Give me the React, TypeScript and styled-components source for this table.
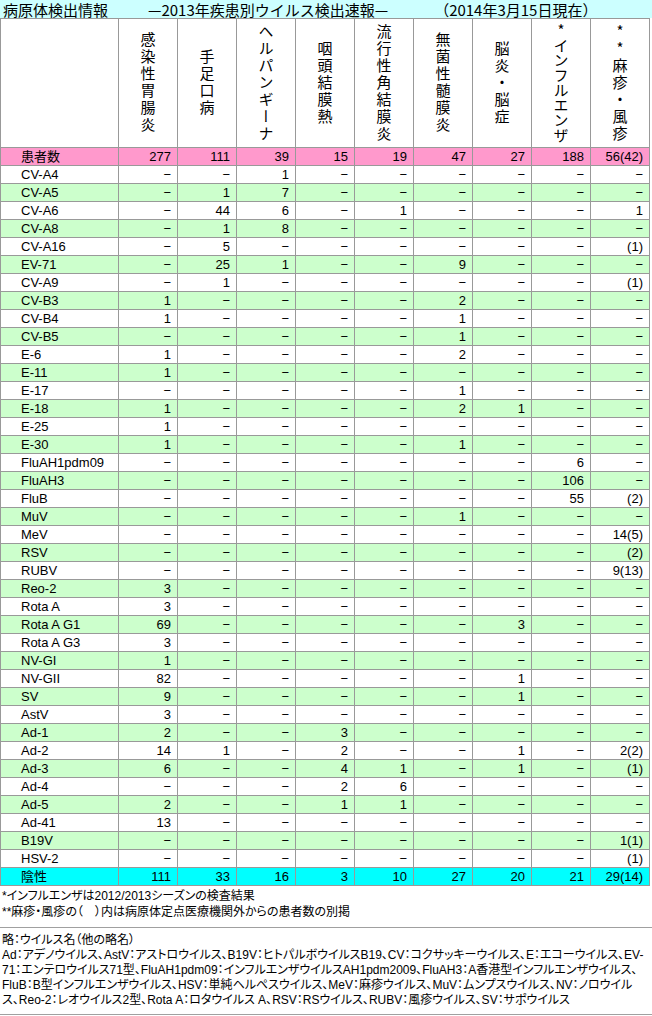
import React from "react";
import styled, { createGlobalStyle } from "styled-components";

type Tone = "total" | "even" | "odd" | "negative";

const GlobalStyle = createGlobalStyle`
  html, body {
    margin: 0;
    padding: 0;
    background: #ffffff;
  }
  body {
    font-family: "Liberation Sans", "Noto Sans CJK JP", sans-serif;
    color: #000000;
  }
`;

const Page = styled.div`
  width: 652px;
`;

const TitleBar = styled.div`
  height: 18px;
  box-sizing: border-box;
  padding: 2px 0 0 3px;
  background: #ccffff;
  display: flex;
  font-family: "Noto Sans CJK JP", sans-serif;
  font-size: 15px;
  line-height: 16px;
  white-space: nowrap;
`;

const TitlePart = styled.span<{ $gap?: number }>`
  margin-left: ${(p) => p.$gap ?? 0}px;
`;

const Table = styled.div`
  width: 650px;
  border-top: 1px solid #999999;
  border-left: 1px solid #999999;
  box-sizing: border-box;
`;

const Row = styled.div<{ $tone?: Tone; $height?: number }>`
  display: grid;
  grid-template-columns: 118px repeat(9, 59px);
  height: ${(p) => p.$height ?? 18}px;
  box-sizing: border-box;
  border-bottom: 1px solid #999999;
  background: ${(p) =>
    p.$tone === "total"
      ? "#ff99cc"
      : p.$tone === "negative"
      ? "#00ffff"
      : p.$tone === "even"
      ? "#ccffcc"
      : "#ffffff"};
`;

const HeadCell = styled.div`
  border-right: 1px solid #999999;
  display: flex;
  align-items: center;
  justify-content: center;
`;

const VerticalLabel = styled.span<{ $tight?: boolean }>`
  writing-mode: vertical-rl;
  text-orientation: upright;
  font-family: "Noto Sans CJK JP", sans-serif;
  font-size: 15px;
  line-height: 15px;
  letter-spacing: ${(p) => (p.$tight ? 0 : 2)}px;
`;

const LabelCell = styled.div`
  border-right: 1px solid #999999;
  padding-left: 20px;
  font-size: 13px;
  line-height: 17px;
  white-space: nowrap;
`;

const ValueCell = styled.div`
  border-right: 1px solid #999999;
  padding-right: 6px;
  text-align: right;
  font-size: 13px;
  line-height: 17px;
  white-space: nowrap;
`;

const Notes = styled.div<{ $lineHeight: number; $top: number }>`
  margin-top: ${(p) => p.$top}px;
  padding-left: 2px;
  font-family: "Liberation Sans", "Noto Sans CJK JP", sans-serif;
  font-size: 12px;
  line-height: ${(p) => p.$lineHeight}px;
  font-feature-settings: "palt";
  white-space: nowrap;
`;

const Divider = styled.div<{ $top: number }>`
  margin-top: ${(p) => p.$top}px;
  height: 0;
  border-top: 1px solid #a0a0a0;
`;

// the flu column has one more glyph, so its header is set tighter
const diseases: [string, boolean][] = [
  ["感染性胃腸炎", false],
  ["手足口病", false],
  ["ヘルパンギーナ", false],
  ["咽頭結膜熱", false],
  ["流行性角結膜炎", false],
  ["無菌性髄膜炎", false],
  ["脳炎・脳症", false],
  ["*インフルエンザ", true],
  ["**麻疹・風疹", false],
];

const d = "-";

const rows: [string, string[]][] = [
  ["CV-A4", [d, d, "1", d, d, d, d, d, d]],
  ["CV-A5", [d, "1", "7", d, d, d, d, d, d]],
  ["CV-A6", [d, "44", "6", d, "1", d, d, d, "1"]],
  ["CV-A8", [d, "1", "8", d, d, d, d, d, d]],
  ["CV-A16", [d, "5", d, d, d, d, d, d, "(1)"]],
  ["EV-71", [d, "25", "1", d, d, "9", d, d, d]],
  ["CV-A9", [d, "1", d, d, d, d, d, d, "(1)"]],
  ["CV-B3", ["1", d, d, d, d, "2", d, d, d]],
  ["CV-B4", ["1", d, d, d, d, "1", d, d, d]],
  ["CV-B5", [d, d, d, d, d, "1", d, d, d]],
  ["E-6", ["1", d, d, d, d, "2", d, d, d]],
  ["E-11", ["1", d, d, d, d, d, d, d, d]],
  ["E-17", [d, d, d, d, d, "1", d, d, d]],
  ["E-18", ["1", d, d, d, d, "2", "1", d, d]],
  ["E-25", ["1", d, d, d, d, d, d, d, d]],
  ["E-30", ["1", d, d, d, d, "1", d, d, d]],
  ["FluAH1pdm09", [d, d, d, d, d, d, d, "6", d]],
  ["FluAH3", [d, d, d, d, d, d, d, "106", d]],
  ["FluB", [d, d, d, d, d, d, d, "55", "(2)"]],
  ["MuV", [d, d, d, d, d, "1", d, d, d]],
  ["MeV", [d, d, d, d, d, d, d, d, "14(5)"]],
  ["RSV", [d, d, d, d, d, d, d, d, "(2)"]],
  ["RUBV", [d, d, d, d, d, d, d, d, "9(13)"]],
  ["Reo-2", ["3", d, d, d, d, d, d, d, d]],
  ["Rota A", ["3", d, d, d, d, d, d, d, d]],
  ["Rota A G1", ["69", d, d, d, d, d, "3", d, d]],
  ["Rota A G3", ["3", d, d, d, d, d, d, d, d]],
  ["NV-GI", ["1", d, d, d, d, d, d, d, d]],
  ["NV-GII", ["82", d, d, d, d, d, "1", d, d]],
  ["SV", ["9", d, d, d, d, d, "1", d, d]],
  ["AstV", ["3", d, d, d, d, d, d, d, d]],
  ["Ad-1", ["2", d, d, "3", d, d, d, d, d]],
  ["Ad-2", ["14", "1", d, "2", d, d, "1", d, "2(2)"]],
  ["Ad-3", ["6", d, d, "4", "1", d, "1", d, "(1)"]],
  ["Ad-4", [d, d, d, "2", "6", d, d, d, d]],
  ["Ad-5", ["2", d, d, "1", "1", d, d, d, d]],
  ["Ad-41", ["13", d, d, d, d, d, d, d, d]],
  ["B19V", [d, d, d, d, d, d, d, d, "1(1)"]],
  ["HSV-2", [d, d, d, d, d, d, d, d, "(1)"]],
];

const patients = ["277", "111", "39", "15", "19", "47", "27", "188", "56(42)"];
const negatives = ["111", "33", "16", "3", "10", "27", "20", "21", "29(14)"];

const show = (v: string) => (v === d ? "−" : v);

const DataRow = ({ label, values, tone }: { label: string; values: string[]; tone: Tone }) => (
  <Row $tone={tone}>
    <LabelCell>{label}</LabelCell>
    {values.map((v, i) => (
      <ValueCell key={i}>{show(v)}</ValueCell>
    ))}
  </Row>
);

export default function App() {
  return (
    <Page>
      <GlobalStyle />
      <TitleBar>
        <TitlePart>病原体検出情報</TitlePart>
        <TitlePart $gap={40}>—2013年疾患別ウイルス検出速報—</TitlePart>
        <TitlePart $gap={46}>（2014年3月15日現在）</TitlePart>
      </TitleBar>

      <Table>
        <Row $height={129}>
          <HeadCell />
          {diseases.map(([name, tight]) => (
            <HeadCell key={name}>
              <VerticalLabel $tight={tight}>{name}</VerticalLabel>
            </HeadCell>
          ))}
        </Row>
        <DataRow label="患者数" values={patients} tone="total" />
        {rows.map(([label, values], i) => (
          <DataRow key={label} label={label} values={values} tone={i % 2 === 0 ? "odd" : "even"} />
        ))}
        <DataRow label="陰性" values={negatives} tone="negative" />
      </Table>

      <Notes $lineHeight={16} $top={2}>
        *インフルエンザは2012/2013シーズンの検査結果
        <br />
        **麻疹・風疹の（　）内は病原体定点医療機関外からの患者数の別掲
      </Notes>
      <Divider $top={7} />
      <Notes $lineHeight={15} $top={5}>
        略：ウイルス名（他の略名）
        <br />
        Ad：アデノウイルス、AstV：アストロウイルス、B19V：ヒトパルボウイルスB19、CV：コクサッキーウイルス、E：エコーウイルス、EV-
        <br />
        71：エンテロウイルス71型、FluAH1pdm09：インフルエンザウイルスAH1pdm2009、FluAH3：A香港型インフルエンザウイルス、
        <br />
        FluB：B型インフルエンザウイルス、HSV：単純ヘルペスウイルス、MeV：麻疹ウイルス、MuV：ムンプスウイルス、NV：ノロウイル
        <br />
        ス、Reo-2：レオウイルス2型、Rota A：ロタウイルス A、RSV：RSウイルス、RUBV：風疹ウイルス、SV：サポウイルス
      </Notes>
      <Divider $top={6} />
    </Page>
  );
}
